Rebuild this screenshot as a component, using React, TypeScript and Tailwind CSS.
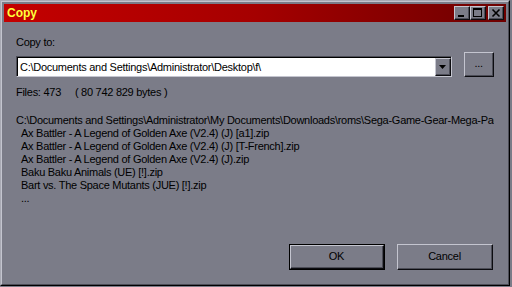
import { ReactNode } from "react";

const font = { fontFamily: '"Liberation Sans", Arial, sans-serif' };

function Bevel({
  children,
  className = "",
  def = false,
}: {
  children: ReactNode;
  className?: string;
  def?: boolean;
}) {
  // raised 3d button, optional black frame for default button
  const inner = (
    <div className="border-t border-l border-t-[#c4c5cf] border-l-[#c4c5cf] border-r border-b border-r-[#0c0c10] border-b-[#0c0c10] h-full">
      <div className="border-r border-b border-r-[#4c4d57] border-b-[#4c4d57] h-full flex items-center justify-center">
        {children}
      </div>
    </div>
  );
  if (def)
    return <div className={`border border-black ${className}`}>{inner}</div>;
  return <div className={className}>{inner}</div>;
}

function TitleButton({ children }: { children: ReactNode }) {
  return (
    <Bevel className="w-[16px] h-[14px] bg-[#7b7c88]">
      <div className="w-[12px] h-[10px] relative">{children}</div>
    </Bevel>
  );
}

export default function App() {
  const items = [
    "Ax Battler - A Legend of Golden Axe (V2.4) (J) [a1].zip",
    "Ax Battler - A Legend of Golden Axe (V2.4) (J) [T-French].zip",
    "Ax Battler - A Legend of Golden Axe (V2.4) (J).zip",
    "Baku Baku Animals (UE) [!].zip",
    "Bart vs. The Space Mutants (JUE) [!].zip",
    "...",
  ];

  return (
    <div
      className="w-[512px] h-[287px] bg-[#7b7c88] text-[11px] tracking-[-0.27px] text-black overflow-hidden"
      style={font}
    >
      <div className="w-[510px] h-[286px] border-t border-l border-[#a9aab4] border-r border-b border-r-black border-b-black">
        <div className="h-full border-t border-l border-t-[#c4c5cf] border-l-[#c4c5cf] border-r border-b border-r-[#4c4d57] border-b-[#4c4d57] p-[2px] flex flex-col">
          {/* title bar */}
          <div className="h-[18px] flex items-center justify-between pl-[3px] pr-[2px] bg-gradient-to-r from-[#c40000] via-[#a50000] to-[#6e0000]">
            <span className="text-[#ffff3c] font-bold text-[12px] tracking-normal leading-none">
              Copy
            </span>
            <div className="flex items-center">
              <TitleButton>
                <div className="absolute left-[2px] bottom-[1px] w-[6px] h-[2px] bg-black" />
              </TitleButton>
              <TitleButton>
                <div className="absolute left-[1px] top-0 w-[9px] h-[9px] border border-black border-t-2" />
              </TitleButton>
              <div className="w-[2px]" />
              <TitleButton>
                <svg width="12" height="10" viewBox="0 0 12 10" className="absolute inset-0">
                  <path d="M2.5 1.5 L9.5 8.5 M9.5 1.5 L2.5 8.5" stroke="black" strokeWidth="1.6" />
                </svg>
              </TitleButton>
            </div>
          </div>

          {/* body */}
          <div className="flex-1 flex flex-col pl-[12px] pr-[12px] min-w-0">
            <div className="mt-[14px] leading-[13px]">Copy to:</div>
            <div className="flex items-end mt-[3px]">
              <div className="w-[438px] h-[21px] border-t border-l border-t-[#4c4d57] border-l-[#4c4d57] border-r border-b border-r-[#c4c5cf] border-b-[#c4c5cf]">
                <div className="h-full border-t border-l border-black flex">
                  <div className="flex-1 bg-white flex items-center pl-[2px] leading-none">
                    C:\Documents and Settings\Administrator\Desktop\f\
                  </div>
                  <Bevel className="w-[16px] h-full bg-[#7b7c88]">
                    <svg width="7" height="4" viewBox="0 0 7 4">
                      <path d="M0 0 H7 L3.5 4 Z" fill="black" />
                    </svg>
                  </Bevel>
                </div>
              </div>
              <Bevel className="w-[30px] h-[25px] ml-[12px] bg-[#7b7c88]">
                <span className="leading-none -mt-[2px]">...</span>
              </Bevel>
            </div>

            <div className="mt-[9px] leading-[13px] whitespace-pre">
              {"Files: 473     ( 80 742 829 bytes )"}
            </div>

            <div className="mt-[15px] leading-[13px] whitespace-nowrap overflow-hidden">
              <div>
                C:\Documents and Settings\Administrator\My Documents\Downloads\roms\Sega-Game-Gear-Mega-Pack
              </div>
              {items.map((t, i) => (
                <div key={i} className="pl-[5px]">
                  {t}
                </div>
              ))}
            </div>

            <div className="flex-1" />
            <div className="flex justify-end gap-[12px] mb-[12px] pr-[1px]">
              <Bevel def className="w-[96px] h-[26px] bg-[#7b7c88]">
                OK
              </Bevel>
              <Bevel className="w-[96px] h-[26px] bg-[#7b7c88]">Cancel</Bevel>
            </div>
          </div>
        </div>
      </div>
    </div>
  );
}
